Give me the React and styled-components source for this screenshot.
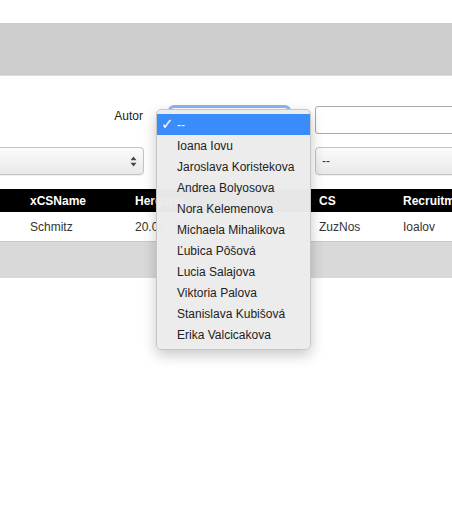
import React from "react";
import styled, { createGlobalStyle } from "styled-components";

const Global = createGlobalStyle`
  html, body { margin: 0; padding: 0; background: #fff; }
  body { font-family: "Liberation Sans", Arial, Helvetica, sans-serif; font-size: 12px; color: #222; overflow: hidden; }
  #root { width: 452px; height: 521px; overflow: hidden; }
`;

const Page = styled.div`
  position: relative;
  width: 452px;
  height: 521px;
  overflow: hidden;
  padding-top: 23px;
  box-sizing: border-box;
`;

const Band = styled.div`
  height: 52px;
  background: #cdcdcd;
  border-bottom: 1px solid #dedede;
`;

const Scroller = styled.div`
  margin-left: -40px;
  width: 640px;
`;

const Form = styled.div`
  display: grid;
  grid-template-columns: 184px 119px 200px;
  column-gap: 26px;
  row-gap: 13px;
  margin-top: 30px;
  align-items: center;
`;

const Label = styled.div`
  text-align: right;
  padding-right: 1px;
  color: #222;
  align-self: start;
  padding-top: 3px;
`;

const FocusSelect = styled.div`
  height: 20px;
  align-self: start;
  margin-top: 1px;
  border-radius: 4px;
  background: #fff;
  border: 1px solid #8fb6e8;
  box-shadow: 0 0 0 2px #8ab8f0;
`;

const Input = styled.div`
  height: 28px;
  box-sizing: border-box;
  border: 1px solid #a9a9a9;
  border-radius: 3px;
  background: #fff;
`;

const Select = styled.div`
  height: 28px;
  box-sizing: border-box;
  border: 1px solid #c3c3c3;
  border-radius: 4px;
  background: linear-gradient(#fbfbfb, #e9e9e9);
  box-shadow: 0 1px 1px rgba(0,0,0,0.06);
  display: flex;
  align-items: center;
  justify-content: ${(p) => (p.$arrows ? "flex-end" : "flex-start")};
  padding: 0 6px;
  color: #333;
`;

const Table = styled.div`
  margin-top: 14px;
`;

const Row = styled.div`
  display: grid;
  grid-template-columns: 70px 105px 184px 84px 1fr;
  height: ${(p) => (p.$head ? "23px" : "29px")};
  align-items: center;
  background: ${(p) => (p.$head ? "#000" : "#fff")};
  color: ${(p) => (p.$head ? "#fff" : "#333")};
  font-weight: ${(p) => (p.$head ? "bold" : "normal")};
  border-bottom: ${(p) => (p.$head ? "none" : "1px solid #c8c8c8")};
  white-space: nowrap;
`;

const Cell = styled.div`
  overflow: hidden;
`;

const Footer = styled.div`
  height: 36px;
  background: #d9d9d9;
`;

const Menu = styled.div`
  position: absolute;
  left: 156px;
  top: 109px;
  width: 155px;
  box-sizing: border-box;
  padding: 4px 0;
  background: rgba(236, 236, 236, 0.98);
  border: 1px solid #c6c6c6;
  border-radius: 5px;
  box-shadow: 0 5px 14px rgba(0, 0, 0, 0.22);
`;

const Item = styled.div`
  height: 21px;
  display: flex;
  align-items: center;
  padding-left: 20px;
  position: relative;
  background: ${(p) => (p.$active ? "#3a8cfb" : "transparent")};
  color: ${(p) => (p.$active ? "#fff" : "#222")};
  white-space: nowrap;
`;

const Check = styled.span`
  position: absolute;
  left: 4px;
  top: 1px;
  font-size: 15px;
  font-family: "DejaVu Sans", sans-serif;
`;

const Arrows = () => (
  <svg width="7" height="11" viewBox="0 0 7 11">
    <path d="M3.5 0.5 L6.5 4.3 L0.5 4.3 Z" fill="#444" />
    <path d="M3.5 10.5 L6.5 6.7 L0.5 6.7 Z" fill="#444" />
  </svg>
);

const names = [
  "Ioana Iovu",
  "Jaroslava Koristekova",
  "Andrea Bolyosova",
  "Nora Kelemenova",
  "Michaela Mihalikova",
  "Ľubica Pôšová",
  "Lucia Salajova",
  "Viktoria Palova",
  "Stanislava Kubišová",
  "Erika Valcicakova",
];

export default function App() {
  return (
    <>
      <Global />
      <Page>
        <Band />
        <Scroller>
          <Form>
            <Label>Autor</Label>
            <FocusSelect />
            <Input />
            <Select $arrows>
              <Arrows />
            </Select>
            <div />
            <Select>--</Select>
          </Form>
          <Table>
            <Row $head>
              <Cell />
              <Cell>xCSName</Cell>
              <Cell>Hergang</Cell>
              <Cell>CS</Cell>
              <Cell>Recruitment</Cell>
            </Row>
            <Row>
              <Cell />
              <Cell>Schmitz</Cell>
              <Cell>20.08.2015</Cell>
              <Cell>ZuzNos</Cell>
              <Cell>Ioalov</Cell>
            </Row>
            <Footer />
          </Table>
        </Scroller>
        <Menu>
          <Item $active>
            <Check>✓</Check>--
          </Item>
          {names.map((n) => (
            <Item key={n}>{n}</Item>
          ))}
        </Menu>
      </Page>
    </>
  );
}
